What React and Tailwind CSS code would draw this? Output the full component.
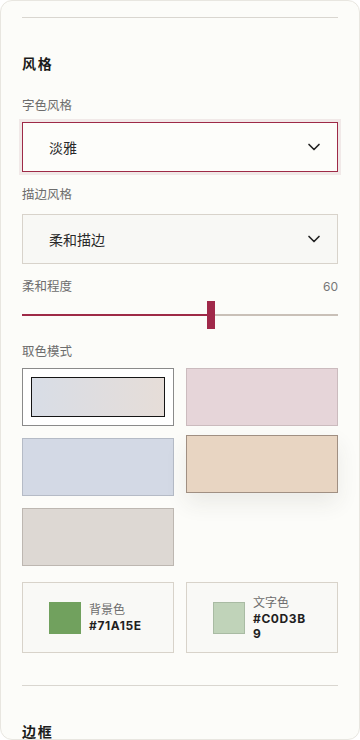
import React, { useState } from "react";
import { ChevronDown } from "lucide-react";

const SWATCHES = [
  { id: "gradient", bg: "", border: "border-[#8a8a8a]" },
  { id: "rose", bg: "bg-[#e6d5d9]", border: "border-[#cbbbbe]" },
  { id: "mist", bg: "bg-[#d3d9e5]", border: "border-[#b5bbc6]" },
  { id: "sand", bg: "bg-[#e8d5c2]", border: "border-[#a08f82]" },
  { id: "stone", bg: "bg-[#ddd8d3]", border: "border-[#bdb7b1]" },
];

const Label = ({ children, className = "" }) => (
  <div className={"text-[12.5px] leading-[20px] text-[#6d6d6d] " + className}>
    {children}
  </div>
);

const SelectBox = ({ value, focused, className = "" }) => (
  <button
    type="button"
    className={
      "flex h-[50px] w-full items-center justify-between border pl-[26px] pr-[13px] text-left text-[14px] text-[#2a2a2a] " +
      (focused
        ? "border-[#9e2a47] bg-[#fdfdfa] shadow-[0_0_0_3px_#f1e9e8]"
        : "border-[#d8d3cb] bg-[#f8f8f5]") +
      " " +
      className
    }
  >
    <span>{value}</span>
    <ChevronDown size={20} strokeWidth={2} className="text-[#222]" />
  </button>
);

const ColorCard = ({ label, hex, swatch }) => (
  <div className="flex h-[71px] items-center gap-[8px] border border-[#d8d3ca] bg-[#f9f9f6] pl-[26px] pr-[26px]">
    <div className={"h-[32px] w-[32px] shrink-0 " + swatch} />
    <div className="min-w-0 flex-1">
      <div className="text-[12px] leading-[16px] text-[#6d6d6d]">{label}</div>
      <div className="break-all font-['Inter'] text-[12px] font-bold leading-[15px] tracking-[0.05em] text-[#1f1f1f]">
        {hex}
      </div>
    </div>
  </div>
);

export default function App() {
  const [picked, setPicked] = useState("sand");
  const softness = 60;

  return (
    <div className="h-[740px] w-[360px] overflow-hidden rounded-[12px] border border-[#e8e6e0] bg-[#fcfcf9] px-[21px] font-['Inter','Noto_Sans_CJK_SC',sans-serif]">
      <div className="mt-[16px] h-px bg-[#d9d6d0]" />

      <h3 className="mt-[36px] text-[14px] font-bold leading-[20px] tracking-[0.12em] text-[#1c1c1c]">
        风格
      </h3>

      <Label className="mt-[22px]">字色风格</Label>
      <SelectBox value="淡雅" focused className="mt-[6px]" />

      <Label className="mt-[13px]">描边风格</Label>
      <SelectBox value="柔和描边" className="mt-[9px]" />

      <div className="mt-[13px] flex items-center justify-between">
        <Label>柔和程度</Label>
        <span className="text-[12px] leading-[20px] text-[#777]">{softness}</span>
      </div>
      <div className="relative mt-[4px] h-[28px]">
        <div className="absolute left-0 right-0 top-[13px] h-[2px] bg-[#c9c0b8]" />
        <div className="absolute left-0 top-[13px] h-[2px] w-[186px] bg-[#9e2a47]" />
        <div className="absolute left-[185px] top-0 h-[28px] w-[8px] bg-[#a0294a]" />
      </div>

      <Label className="mt-[13px]">取色模式</Label>
      <div className="mt-[6px] grid grid-cols-2 gap-x-[12px] gap-y-[12px]">
        {SWATCHES.map((s) => {
          const active = picked === s.id;
          if (s.id === "gradient") {
            return (
              <button
                key={s.id}
                type="button"
                onClick={() => setPicked(s.id)}
                className="h-[58px] border border-[#8a8a8a] bg-white p-[8px]"
              >
                <div className="h-full w-full border-[1.5px] border-[#151515] bg-gradient-to-r from-[#d8dde6] to-[#e6ddd8]" />
              </button>
            );
          }
          return (
            <button
              key={s.id}
              type="button"
              onClick={() => setPicked(s.id)}
              className={
                "h-[58px] border " +
                s.bg +
                " " +
                s.border +
                (active
                  ? " -translate-y-[3px] shadow-[0_10px_22px_rgba(60,60,40,0.09)]"
                  : "")
              }
            />
          );
        })}
      </div>

      <div className="mt-[16px] grid grid-cols-2 gap-[12px]">
        <ColorCard label="背景色" hex="#71A15E" swatch="bg-[#71a15e]" />
        <ColorCard
          label="文字色"
          hex="#C0D3B9"
          swatch="border border-[#a9bba3] bg-[#c0d3b9]"
        />
      </div>

      <div className="mt-[32px] h-px bg-[#d9d6d0]" />

      <h3 className="mt-[36px] text-[14px] font-bold leading-[20px] tracking-[0.12em] text-[#1c1c1c]">
        边框
      </h3>
    </div>
  );
}
